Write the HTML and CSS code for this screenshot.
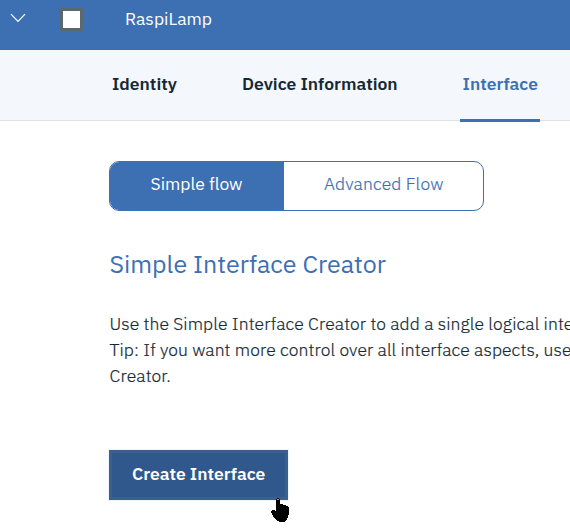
FILE: index.html
```html
<!DOCTYPE html>
<html lang="en">
<head>
<meta charset="utf-8">
<title>RaspiLamp</title>
<link rel="stylesheet" href="styles.css">
</head>
<body>
<header class="device-row">
  <svg class="chevron" width="16" height="10" viewBox="0 0 16 10"><path d="M1 1.2 8 8.4 15 1.2" fill="none" stroke="#fff" stroke-width="1.2"/></svg>
  <span class="checkbox"></span>
  <span class="device-name">RaspiLamp</span>
</header>
<nav class="tabs">
  <a class="tab identity">Identity</a>
  <a class="tab info">Device Information</a>
  <a class="tab active">Interface</a>
</nav>
<main class="content">
  <div class="switcher">
    <div class="option selected"><span class="simple">Simple flow</span></div>
    <div class="option"><span class="advanced">Advanced Flow</span></div>
  </div>
  <h1 class="title">Simple Interface Creator</h1>
  <p class="description"><span class="line first">Use the Simple Interface Creator to add a single logical inte</span><span class="line second">Tip: If you want more control over all interface aspects, use</span><span class="line third">Creator.</span></p>
  <button class="create">Create Interface</button>
</main>
<svg class="cursor" width="18" height="24" viewBox="0 0 18 24"><path d="M5 1h1V0h2v1h1v5h3v1h3v1h2v1h1v8h-1v3h-1v2h-1v1h-1v1H8v-1H6v-1H5v-1H4v-1H3v-1H2v-2H1v-2H0v-2h1v-1h3v1h1z" fill="#000"/><path d="M6 1h2v1H6z" fill="#b7a58c"/></svg>
</body>
</html>
```

FILE: styles.css
```css
* { box-sizing: border-box; }
body {
  margin: 0;
  width: 570px;
  height: 532px;
  overflow: hidden;
  background: #fff;
  color: #152935;
  font-family: "IBM Plex Sans", "Noto Sans", sans-serif;
  font-size: 17.5px;
  white-space: nowrap;
}
.device-row {
  display: flex;
  height: 50px;
  padding: 8px 0 0 10px;
  background: #3d70b2;
  color: #fff;
}
.chevron { margin-top: 5px; }
.checkbox {
  width: 23px;
  height: 23px;
  margin-left: 34px;
  border: 3px solid #5a6872;
  background: #fff;
}
.device-name { margin-left: 42px; line-height: 22px; }
.tabs {
  display: flex;
  height: 71px;
  padding-left: 112px;
  background: #f4f7fb;
  border-bottom: 1px solid #dfe3e6;
  font-weight: 600;
  line-height: 68px;
}
.identity { width: 130px; }
.info { width: 218px; }
.active {
  width: 80px;
  height: 72px;
  padding-left: 2.5px;
  border-bottom: 3px solid #3d70b2;
  color: #3d70b2;
}
.content { padding: 40px 0 0 109px; }
.switcher {
  display: flex;
  width: 375px;
  height: 50px;
  border: 1px solid #3d70b2;
  border-radius: 10px;
  overflow: hidden;
  line-height: 43px;
}
.option { flex: 1; padding-left: 40px; color: #3d70b2; font-weight: 300; }
.advanced { letter-spacing: 0.15px; -webkit-text-stroke: 0.2px; }
.selected { flex: 0 0 174px; padding-left: 40.5px; background: #3d70b2; color: #fff; font-weight: 400; }
.title {
  margin: 35px 0 0 0.5px;
  color: #3d70b2;
  font-size: 25px;
  font-weight: 400;
  line-height: 36px;
}
.description {
  margin: 29px 0 0 0.5px;
  font-weight: 300;
  line-height: 26px;
  letter-spacing: 0.1px;
  -webkit-text-stroke: 0.2px;
}
.line { display: block; }
.create {
  display: block;
  width: 179px;
  height: 50px;
  margin-top: 61px;
  padding: 0 0 4px 20px;
  border: 3px solid #39608f;
  background: #30588c;
  color: #fff;
  font: inherit;
  font-weight: 600;
  text-align: left;
  outline: 1px solid #f0f5fa;
}
.cursor { position: absolute; left: 271px; top: 498px; }
```
